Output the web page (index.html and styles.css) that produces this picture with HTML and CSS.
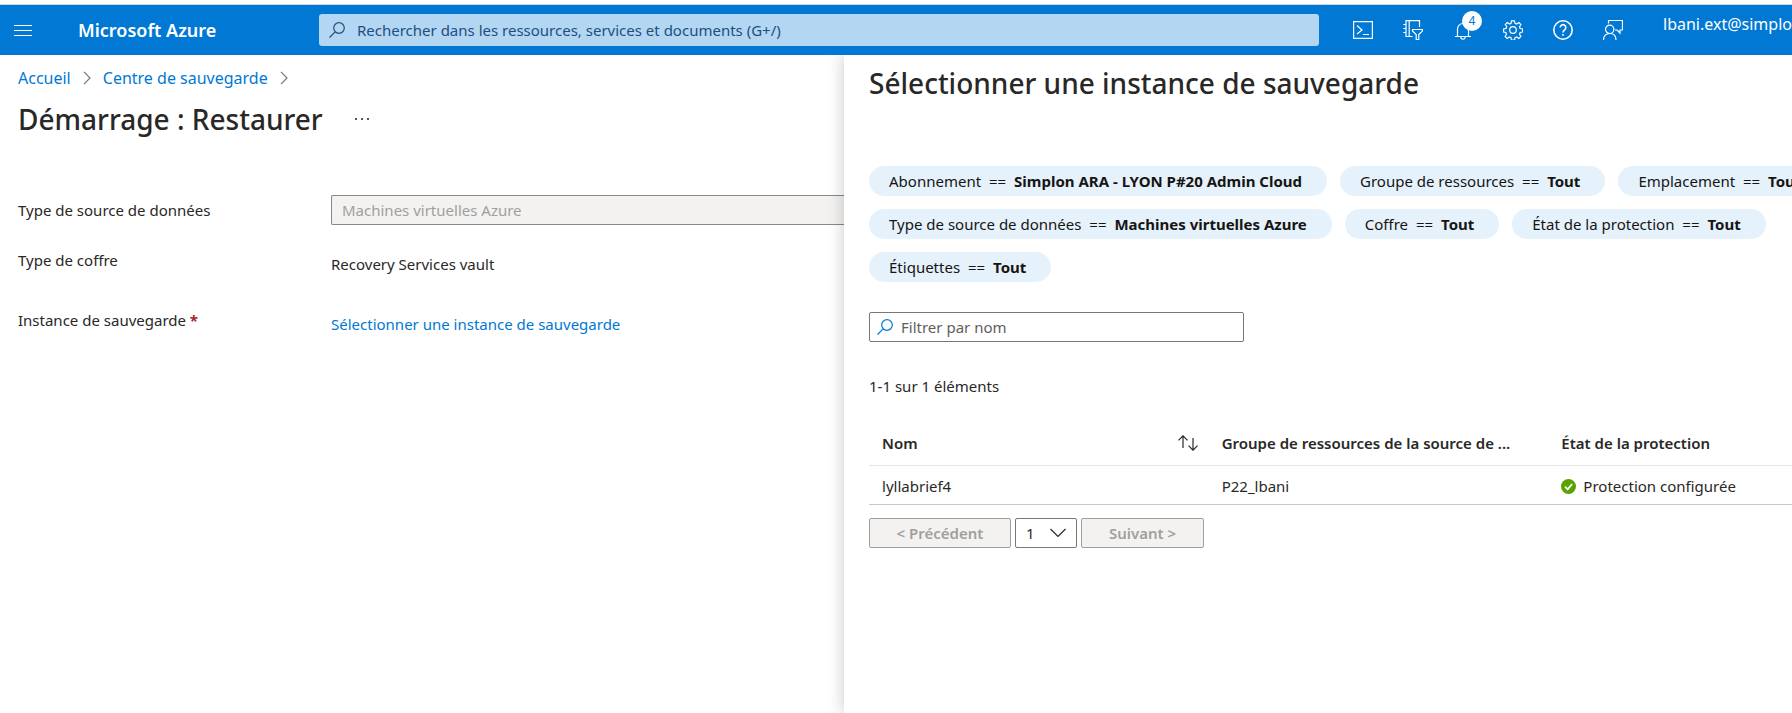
FILE: index.html
```
<!DOCTYPE html>
<html lang="fr">
<head>
<meta charset="utf-8">
<title>Démarrage : Restaurer - Microsoft Azure</title>
<meta name="viewport" content="width=device-width, initial-scale=1">
<link rel="stylesheet" href="styles.css">
</head>
<body>
<header class="topbar">
  <button class="menu-button" type="button" aria-label="Menu">
    <svg class="icon" width="18" height="13" viewBox="0 0 18 13"><path d="M0 1.5h18M0 6.5h18M0 11.5h18"/></svg>
  </button>
  <a class="brand" href="#">Microsoft Azure</a>
  <div class="global-search">
    <svg class="icon" width="16" height="16" viewBox="0 0 16 16"><circle cx="10" cy="6" r="5.3"/><path d="M6.2 9.8L.5 15.5"/></svg>
    <input type="text" aria-label="Rechercher" placeholder="Rechercher dans les ressources, services et documents (G+/)">
  </div>
  <nav class="tools">
    <button type="button" aria-label="Cloud Shell">
      <svg class="icon" width="20" height="20" viewBox="0 0 20 20"><path d="M.6 1.6h18.8v16.800H.6z M4 5.500l5 4.500-5 4M10 14.500h6"/></svg>
    </button>
    <button type="button" aria-label="Annuaires et abonnements">
      <svg class="icon" width="20" height="20" viewBox="0 0 20 20"><path d="M9.500 16.500H3V.6h13.500V7M6.200.6v16M.3 4.500H3.500M.3 8.500H3.500M.3 12.500H3.500M9.500 9.500h10v1.500l-3.700 3.500v5h-2.600v-5l-3.700-3.500z"/></svg>
    </button>
    <button class="bell" type="button" aria-label="Notifications">
      <svg class="icon" width="20" height="20" viewBox="0 0 20 20"><path d="M2 16.500h16M4.500 16.500V9a5.500 5.500 0 0 1 11 0v7.500M7.800 17a2.200 2.200 0 0 0 4.400 0"/></svg>
      <span class="badge">4</span>
    </button>
    <button type="button" aria-label="Paramètres">
      <svg class="icon" width="20" height="20" viewBox="0 0 20 20"><circle cx="10" cy="10" r="3.300"/><path d="M8.500.8h3l.5 2.500 1.700.7 2.200-1.400 2 2-1.400 2.200.7 1.700 2.400.5v3l-2.400.5-.7 1.700 1.400 2.200-2 2-2.200-1.400-1.700.7-.5 2.400h-3l-.5-2.400-1.700-.7-2.200 1.400-2-2 1.400-2.200-.7-1.700L.6 12V9l2.400-.5.7-1.700L2.300 4.600l2-2L6.500 4l1.500-.7z"/></svg>
    </button>
    <button type="button" aria-label="Aide">
      <svg class="icon thick" width="20" height="20" viewBox="0 0 20 20"><circle cx="10" cy="10" r="9.200"/><path d="M7.200 7.500a2.800 2.800 0 1 1 4.400 2.300c-1.100.8-1.600 1.400-1.600 2.700M10 14v1.700"/></svg>
    </button>
    <button type="button" aria-label="Commentaires">
      <svg class="icon" width="20" height="20" viewBox="0 0 20 20"><path d="M5.500 3.500v-3h14v9.500h-2.500v3l-3-3h-2M.5 20c0-4.200 2.600-6.500 6.200-6.500s6.300 2.300 6.300 6.500"/><circle cx="6.700" cy="9.300" r="4.200"/></svg>
    </button>
  </nav>
  <div class="account">lbani.ext@simplo</div>
</header>

<main class="workspace">
  <section class="blade">
    <nav class="breadcrumb" aria-label="Fil d'Ariane">
      <a href="#">Accueil</a>
      <svg class="icon" width="8" height="14" viewBox="0 0 8 14"><path d="M1 .8L7 7l-6 6.200"/></svg>
      <a href="#">Centre de sauvegarde</a>
      <svg class="icon" width="8" height="14" viewBox="0 0 8 14"><path d="M1 .8L7 7l-6 6.200"/></svg>
    </nav>
    <div class="blade-head">
      <h1>Démarrage : Restaurer</h1>
      <button class="more" type="button" aria-label="Plus">
        <svg width="14" height="4" viewBox="0 0 14 4"><path d="M0 1h2v2H0zM6 1h2v2H6zM12 1h2v2h-2z"/></svg>
      </button>
    </div>
    <div class="form">
      <label class="source-label" for="source">Type de source de données</label>
      <input id="source" class="source" type="text" value="Machines virtuelles Azure" disabled>
      <span>Type de coffre</span>
      <span class="value">Recovery Services vault</span>
      <span>Instance de sauvegarde <b class="required">*</b></span>
      <a class="value" href="#">Sélectionner une instance de sauvegarde</a>
    </div>
  </section>

  <section class="panel">
    <div class="panel-body">
      <h2>Sélectionner une instance de sauvegarde</h2>
      <div class="filters">
        <button type="button">Abonnement <span>==</span> <b>Simplon ARA - LYON P#20 Admin Cloud</b></button>
        <button type="button">Groupe de ressources <span>==</span> <b>Tout</b></button>
        <button type="button">Emplacement <span>==</span> <b>Tout</b></button>
        <button type="button">Type de source de données <span>==</span> <b>Machines virtuelles Azure</b></button>
        <button type="button">Coffre <span>==</span> <b>Tout</b></button>
        <button type="button">État de la protection <span>==</span> <b>Tout</b></button>
        <button type="button">Étiquettes <span>==</span> <b>Tout</b></button>
      </div>
      <div class="name-filter">
        <svg class="icon" width="16" height="16" viewBox="0 0 16 16"><circle cx="10" cy="6" r="5.300"/><path d="M6.200 9.800L.5 15.500"/></svg>
        <input type="text" aria-label="Filtrer par nom" placeholder="Filtrer par nom">
      </div>
      <p class="count">1-1 sur 1 éléments</p>
      <table class="items">
        <thead>
          <tr>
            <th><div class="sortable">Nom
              <svg class="icon" width="20" height="16" viewBox="0 0 20 16"><path d="M5 13V.8M.5 5.300L5 .8l4.500 4.500M15 3v12.200M10.500 10.700l4.500 4.500 4.500-4.500"/></svg></div></th>
            <th>Groupe de ressources de la source de ...</th>
            <th>État de la protection</th>
          </tr>
        </thead>
        <tbody>
          <tr>
            <td>lyllabrief4</td>
            <td>P22_lbani</td>
            <td><div class="status">
              <svg width="15" height="15" viewBox="0 0 15 15"><circle cx="7.500" cy="7.500" r="7.500" fill="#57a300"/><path d="M4 7.700l2.600 2.600 4.500-5.300" fill="none" stroke="#fff" stroke-width="1.800"/></svg>
              Protection configurée</div></td>
          </tr>
        </tbody>
      </table>
      <div class="pager">
        <button class="previous" type="button" disabled>&lt; Précédent</button>
        <div class="page-select">
          <select aria-label="Page"><option>1</option></select>
          <svg class="icon" width="16" height="10" viewBox="0 0 16 10"><path d="M.5 1L8 8.500 15.500 1"/></svg>
        </div>
        <button class="next" type="button" disabled>Suivant &gt;</button>
      </div>
    </div>
  </section>
</main>
</body>
</html>
```
FILE: styles.css
```
* { box-sizing: border-box; }

body {
  margin: 0;
  min-height: 100vh;
  display: flex;
  flex-direction: column;
  padding-top: 4px;
  overflow: hidden;
  background: #fff;
  color: #292827;
  font: 15px/20px "Noto Sans", "Open Sans", sans-serif;
}

button, input, select { font: inherit; color: inherit; }
button { cursor: pointer; }
a { color: #0078d4; text-decoration: none; }
h1, h2, p { margin: 0; }

.icon {
  flex: none;
  fill: none;
  stroke: currentColor;
  stroke-width: 1.2;
}

.topbar {
  display: flex;
  align-items: center;
  height: 51px;
  border-top: 1px solid #d2d6da;
  background: #0078d4;
  color: #fff;
}

.menu-button, .tools button {
  display: flex;
  align-items: center;
  justify-content: center;
  padding: 0;
  border: 0;
  background: none;
}

.menu-button { width: 46px; height: 50px; }

.brand {
  flex: 0 0 273px;
  padding-left: 32px;
  color: #fff;
  font-size: 18px;
  font-weight: 600;
}

.global-search {
  flex: 1;
  display: flex;
  align-items: center;
  gap: 12px;
  height: 32px;
  padding: 0 10px;
  border-radius: 3px;
  background: #b3d6f2;
  color: #1c4f80;
}

.global-search input, .name-filter input {
  flex: 1;
  min-width: 0;
  padding: 0;
  border: 0;
  outline: 0;
  background: none;
}

.global-search input::placeholder { color: #1c4f80; opacity: 1; }

.tools { display: flex; margin-left: 19px; }
.tools button { position: relative; width: 50px; height: 50px; }
.thick { stroke-width: 1.6; }

.badge {
  position: absolute;
  top: 6px;
  left: 24px;
  width: 20px;
  height: 20px;
  border-radius: 10px;
  background: #fff;
  color: #0078d4;
  font-size: 12px;
  line-height: 19px;
  text-align: center;
}

.account {
  flex: 0 0 154px;
  padding: 0 0 12px 25px;
  overflow: hidden;
  font-size: 16px;
  white-space: nowrap;
}

.workspace { flex: 1; display: flex; }

.blade {
  flex: 0 0 47.1%;
  padding: 12px 0 0 18px;
  overflow: hidden;
}

.breadcrumb {
  display: flex;
  align-items: center;
  gap: 12px;
  font-size: 16px;
  line-height: 22px;
}

.breadcrumb .icon { color: #777; }

.blade-head {
  display: flex;
  align-items: center;
  gap: 32px;
  margin-top: 10px;
}

h1, h2 {
  font-size: 28px;
  line-height: 40px;
  font-weight: 500;
}

.more {
  display: flex;
  padding: 0;
  border: 0;
  background: none;
  fill: #555;
}

.form {
  display: grid;
  grid-template-columns: 313px 1fr;
  margin-top: 56px;
}

.form > * { margin-bottom: 36px; }
.form .source-label { margin-bottom: 25px; line-height: 30px; }

.form .source {
  height: 30px;
  margin-bottom: 25px;
  padding: 0 10px;
  border: 1px solid #8a8886;
  border-right: 0;
  border-radius: 2px 0 0 2px;
  background: #f3f2f1;
  color: #a19f9d;
}

.value { padding-top: 4px; }
.required { color: #a4262c; }

.panel {
  flex: 1;
  min-width: 0;
  padding: 8px 0 0 25px;
  overflow: hidden;
  background: #fff;
  box-shadow: 0 0 16px rgba(0, 0, 0, .22);
  clip-path: inset(0 0 0 -20px);
}

.panel-body { width: 1019px; }

.filters {
  display: flex;
  flex-wrap: wrap;
  gap: 13px;
  margin-top: 63px;
}

.filters button {
  height: 30px;
  padding: 0 25px 0 20px;
  border: 0;
  border-radius: 15px;
  background: #e5f1fb;
  color: #161514;
}

.filters span { margin: 0 4px; }

.name-filter {
  display: flex;
  align-items: center;
  gap: 8px;
  width: 375px;
  height: 30px;
  margin-top: 30px;
  padding: 0 7px;
  border: 1px solid #7a7876;
  border-radius: 2px;
  color: #0078d4;
}

.name-filter input { color: #323130; }
.name-filter input::placeholder { color: #605e5c; opacity: 1; }

.count { margin-top: 34px; }

.items {
  width: 100%;
  margin-top: 26px;
  border-collapse: collapse;
  table-layout: fixed;
}

.items th, .items td {
  padding: 0 13px;
  text-align: left;
  white-space: nowrap;
}

.items th { height: 43px; border-bottom: 1px solid #e5e5e5; font-weight: 600; }
.items td { height: 39px; padding-top: 3px; border-bottom: 1px solid #c8c8c8; }

.sortable { display: flex; align-items: center; justify-content: space-between; margin-right: -2px; }
.status { display: flex; align-items: center; gap: 7px; }

.pager { display: flex; gap: 4px; margin-top: 13px; }

.pager button, .page-select {
  height: 30px;
  padding: 0;
  border: 1px solid #a19f9d;
  border-radius: 2px;
}

.pager button { background: #f3f2f1; color: #a19f9d; font-weight: 600; }
.pager .previous { width: 142px; }
.pager .next { width: 123px; }

.page-select {
  display: grid;
  align-items: center;
  width: 62px;
  border-color: #7a7876;
}

.page-select > * { grid-area: 1 / 1; }
.page-select .icon { justify-self: end; margin-right: 10px; pointer-events: none; }

.page-select select {
  width: 100%;
  padding: 0 10px;
  border: 0;
  outline: 0;
  appearance: none;
  background: none;
}
```
